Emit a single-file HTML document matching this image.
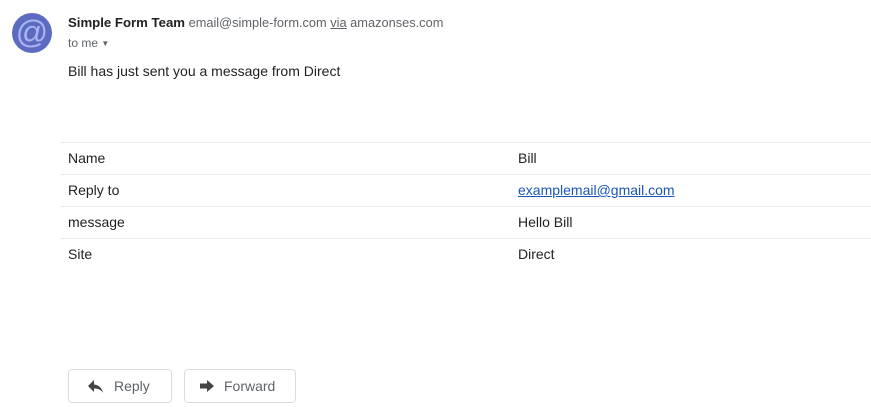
<!DOCTYPE html>
<html><head><style>
body{margin:0;width:871px;height:407px;background:#fff;font-family:"Liberation Sans",Arial,sans-serif;color:#222;position:relative;overflow:hidden}
.a{position:absolute}
.av{left:12px;top:13px;width:40px;height:40px;border-radius:50%;background:#5c6bc0;color:#a9b4f5;font-size:32px;line-height:38px;text-align:center}
.row{position:absolute;left:60px;right:0;height:32px;border-top:1px solid #ebebeb;font-size:14px;line-height:31px}
.row span{position:absolute;left:8px}
.row b{position:absolute;left:458px;font-weight:normal}
.btn{position:absolute;top:369px;height:34px;border:1px solid #dadce0;border-radius:4px;font-size:14px;color:#5f6368;line-height:32px;box-sizing:border-box}
</style></head><body>
<div class="a av">@</div>
<div class="a" style="left:68px;top:15px;font-size:12.8px;color:#5f6368;white-space:nowrap"><b style="color:#202124;font-size:13.2px">Simple Form Team</b> email@simple-form.com <u>via</u> amazonses.com</div>
<div class="a" style="left:68px;top:36px;font-size:12px;color:#5f6368">to me <span style="font-size:8px;position:relative;top:-1px">&#9660;</span></div>
<div class="a" style="left:68px;top:63px;font-size:14px;color:#222">Bill has just sent you a message from Direct</div>
<div class="row" style="top:142px"><span>Name</span><b>Bill</b></div>
<div class="row" style="top:174px"><span>Reply to</span><b style="color:#1a55b6;text-decoration:underline">examplemail@gmail.com</b></div>
<div class="row" style="top:206px"><span>message</span><b>Hello Bill</b></div>
<div class="row" style="top:238px"><span>Site</span><b>Direct</b></div>
<div class="btn" style="left:68px;width:104px">
<svg class="a" style="left:18px;top:9px" width="17" height="14" viewBox="0 0 17 14"><path d="M7 1L1 7l6 6V9.5c4 0 7 1 9 4.5-1-5-4-8-9-8.5z" fill="#444"/></svg>
<span class="a" style="left:45px">Reply</span></div>
<div class="btn" style="left:184px;width:112px">
<svg class="a" style="left:14px;top:9px" width="16" height="14" viewBox="0 0 16 14"><path d="M8 1l7 6-7 6V9.5H1v-5h7z" fill="#444"/></svg>
<span class="a" style="left:39px">Forward</span></div>
</body></html>
